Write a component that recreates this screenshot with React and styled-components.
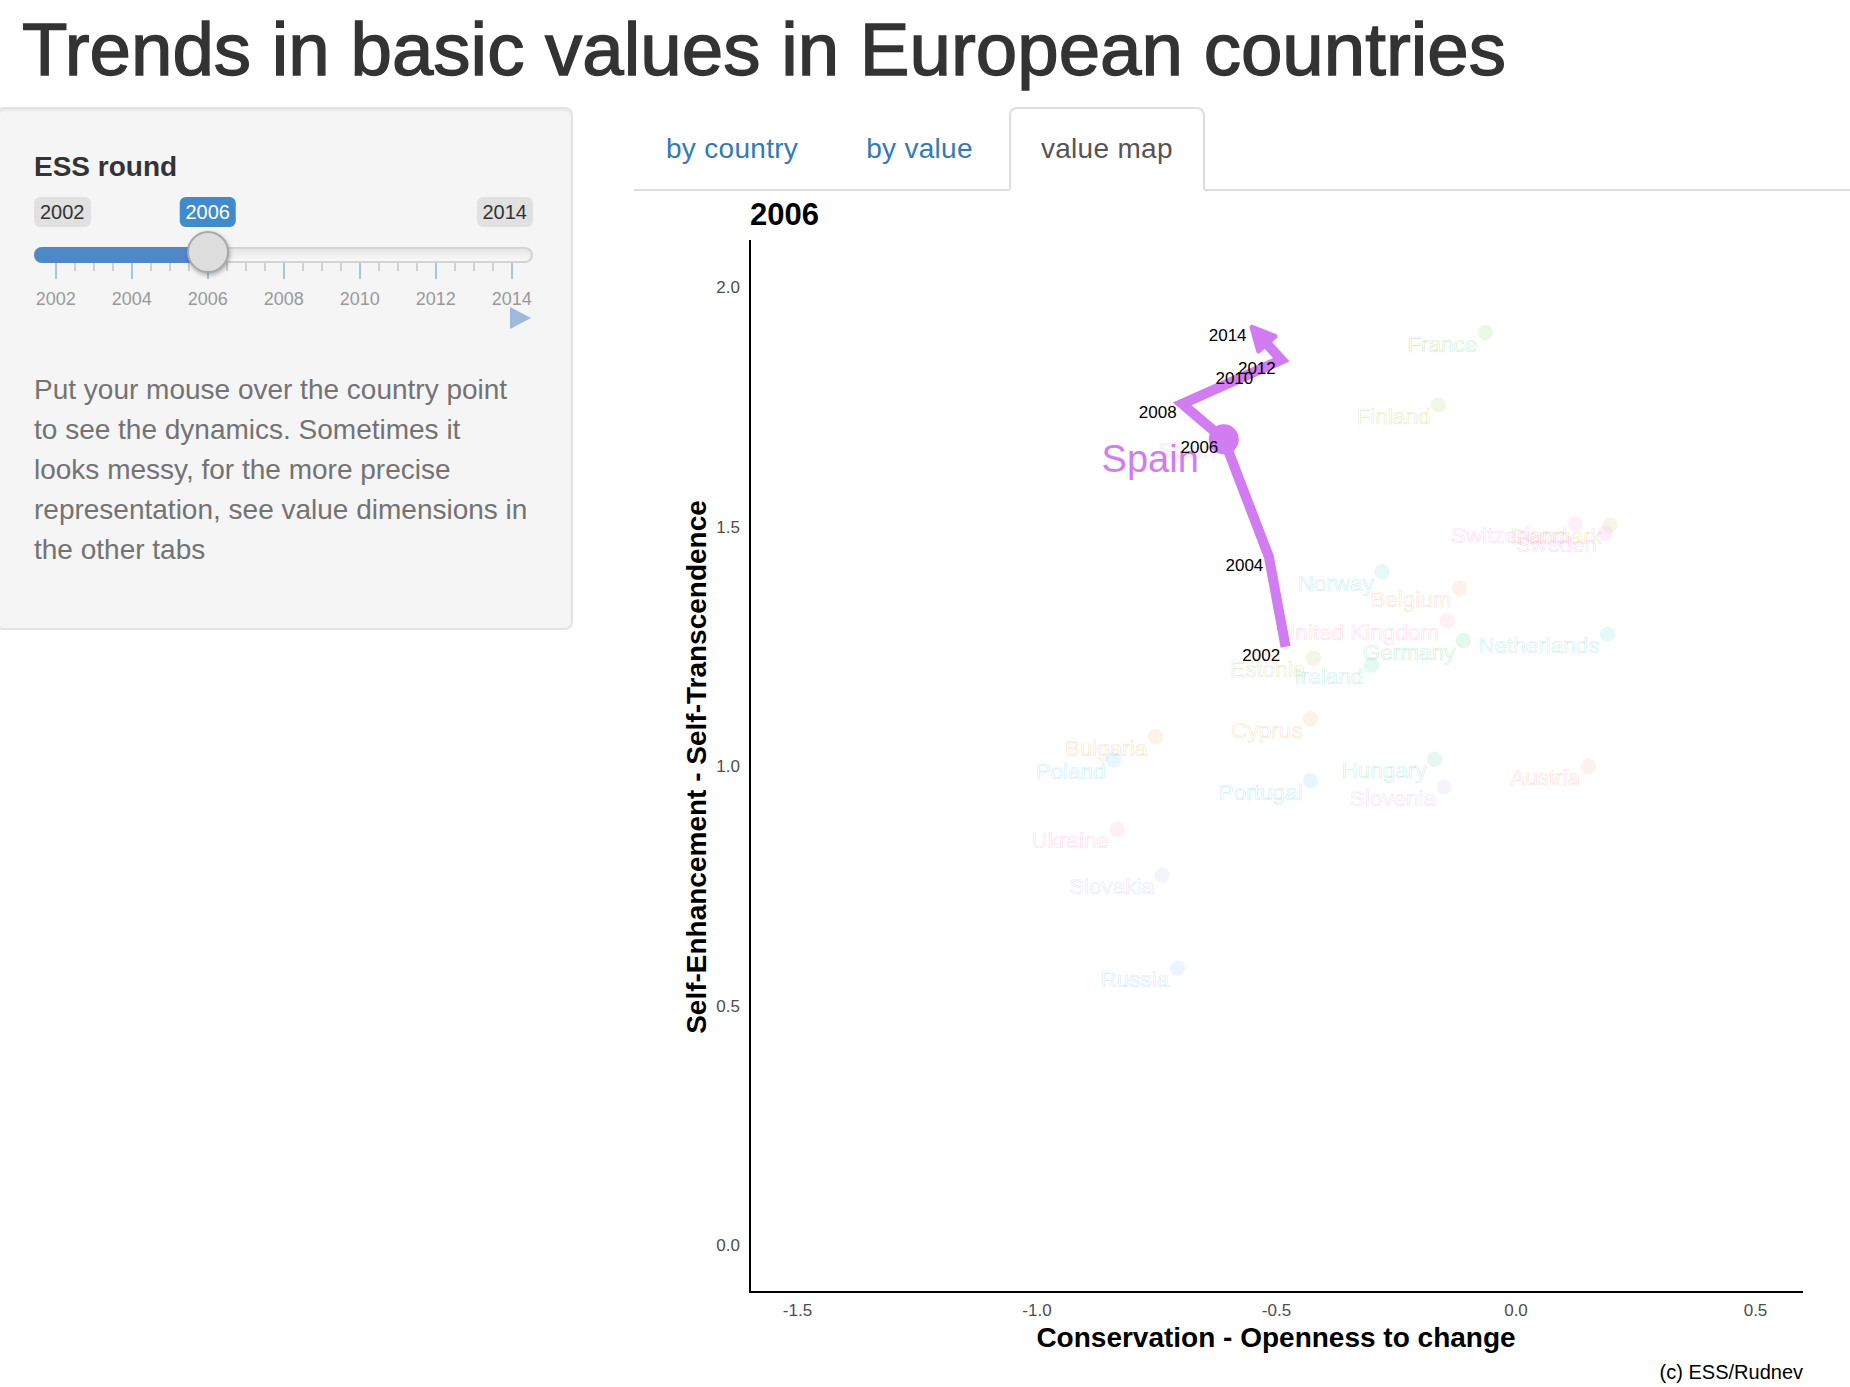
import React from "react";
import styled, { createGlobalStyle } from "styled-components";

const GlobalStyle = createGlobalStyle`
  * {
    box-sizing: border-box;
  }
  html,
  body {
    margin: 0;
    padding: 0;
    background: #fff;
    overflow: hidden;
  }
  body {
    font-family: "Liberation Sans", Helvetica, Arial, sans-serif;
    color: #333;
  }
`;

const Page = styled.div`
  width: 1850px;
  height: 1387px;
  padding-left: 22px;
  overflow: hidden;
`;

const Title = styled.h1`
  margin: 9px 0 17px;
  font-size: 74.5px;
  line-height: 81px;
  font-weight: 400;
  color: #333;
  -webkit-text-stroke: 1.4px #333;
  white-space: nowrap;
`;

const Layout = styled.div`
  display: flex;
  align-items: flex-start;
`;

const Well = styled.div`
  flex: 0 0 577px;
  width: 577px;
  min-width: 0;
  margin-left: -26px;
  padding: 36px 36px 38px;
  background: #f5f5f5;
  border: 2px solid #e3e3e3;
  border-radius: 8px;
  box-shadow: inset 0 2px 2px rgba(0, 0, 0, 0.05);
`;

const ControlLabel = styled.label`
  display: block;
  margin: 2px 0 8px;
  font-size: 28px;
  line-height: 40px;
  font-weight: 700;
  color: #333;
`;

const Slider = styled.div`
  position: relative;
  height: 175px;
`;

const EdgeLabels = styled.div`
  display: flex;
  justify-content: space-between;
  padding: 2px 2px 0 0;
`;

const Badge = styled.span`
  display: inline-block;
  padding: 2px 6px;
  border-radius: 6px;
  font-size: 20px;
  line-height: 26px;
  background: ${(p) => (p.$current ? "#428bca" : "#e1e1e1")};
  color: ${(p) => (p.$current ? "#fff" : "#333")};
`;

const CurrentBadge = styled(Badge)`
  position: absolute;
  top: 2px;
  transform: translateX(-50%);
  white-space: nowrap;
`;

const Track = styled.div`
  position: relative;
  height: 16px;
  margin: 20px 2px 0 0;
  border: 2px solid #d3d3d3;
  border-radius: 8px;
  background: linear-gradient(#e6e6e6, #f8f8f8);
`;

const TrackFill = styled.div`
  position: absolute;
  left: -2px;
  top: -2px;
  bottom: -2px;
  border-radius: 8px 0 0 8px;
  background: #4f88c7;
`;

const Handle = styled.div`
  position: absolute;
  top: 36px;
  width: 42px;
  height: 42px;
  border-radius: 50%;
  background: #dedede;
  border: 2px solid #a9a9a9;
  box-shadow: 1px 2px 4px rgba(0, 0, 0, 0.3);
  transform: translateX(-50%);
`;

const Ticks = styled.div`
  display: flex;
  justify-content: space-between;
  align-items: flex-start;
  width: 458px;
  height: 16px;
  margin-left: 20.7px;
`;

const Tick = styled.span`
  width: 2px;
  height: ${(p) => (p.$major ? 16 : 8)}px;
  background: ${(p) => (p.$major ? "#a9c4e2" : "#d0d0d0")};
`;

const TickLabels = styled.div`
  display: grid;
  grid-template-columns: repeat(7, 76px);
  margin: 9px 0 0 -16.3px;
  font-size: 18px;
  line-height: 22px;
  color: #999;
  text-align: center;
`;

const PlayButton = styled.button`
  display: block;
  width: 0;
  height: 0;
  margin: -3px 4px 0 auto;
  padding: 0;
  background: none;
  border: none;
  border-left: 21px solid #9db9db;
  border-top: 11px solid transparent;
  border-bottom: 11px solid transparent;
  cursor: pointer;
`;

const Help = styled.p`
  max-width: 495px;
  margin: 0 0 20px;
  font-size: 28px;
  line-height: 40px;
  color: #737373;
`;

const Main = styled.div`
  flex: 1;
  min-width: 0;
  margin-left: 61px;
`;

const Tabs = styled.ul`
  display: flex;
  margin: 0;
  padding: 0;
  list-style: none;
  border-bottom: 2px solid #ddd;
`;

const TabItem = styled.li`
  margin: 0 4px -2px 0;
`;

const TabLink = styled.a`
  display: block;
  padding: 20px 30px;
  font-size: 28px;
  line-height: 40px;
  letter-spacing: 0.3px;
  text-decoration: none;
  border: 2px solid ${(p) => (p.$active ? "#ddd" : "transparent")};
  border-bottom-color: ${(p) => (p.$active ? "#fff" : "transparent")};
  border-radius: 8px 8px 0 0;
  background: ${(p) => (p.$active ? "#fff" : "transparent")};
  color: ${(p) => (p.$active ? "#555" : "#337ab7")};
  cursor: pointer;
`;

const Plot = styled.svg`
  display: block;
  font-family: "Liberation Sans", Helvetica, Arial, sans-serif;
`;

// ggplot-like hcl palette
const hcl = (h, c = 100, l = 65) => {
  const rad = (h * Math.PI) / 180;
  const U = c * Math.cos(rad);
  const V = c * Math.sin(rad);
  const Xn = 95.047, Yn = 100, Zn = 108.883;
  const un = (4 * Xn) / (Xn + 15 * Yn + 3 * Zn);
  const vn = (9 * Yn) / (Xn + 15 * Yn + 3 * Zn);
  const Y = Yn * Math.pow((l + 16) / 116, 3);
  const u = U / (13 * l) + un;
  const v = V / (13 * l) + vn;
  const X = (Y * 9 * u) / (4 * v);
  const Z = (Y * (12 - 3 * u - 20 * v)) / (4 * v);
  const x = X / 100, y = Y / 100, z = Z / 100;
  const lin = [
    3.2406 * x - 1.5372 * y - 0.4986 * z,
    -0.9689 * x + 1.8758 * y + 0.0415 * z,
    0.0557 * x - 0.204 * y + 1.057 * z,
  ];
  const hex = lin
    .map((ch) => (ch <= 0.0031308 ? 12.92 * ch : 1.055 * Math.pow(ch, 1 / 2.4) - 0.055))
    .map((ch) => Math.round(Math.min(1, Math.max(0, ch)) * 255))
    .map((ch) => ch.toString(16).padStart(2, "0"))
    .join("");
  return `#${hex}`;
};

const countries = [
  { name: "Austria", x: 0.151, y: 0.999 },
  { name: "Belgium", x: -0.118, y: 1.371 },
  { name: "Bulgaria", x: -0.753, y: 1.061 },
  { name: "Cyprus", x: -0.429, y: 1.098 },
  { name: "Denmark", x: 0.196, y: 1.503 },
  { name: "Estonia", x: -0.423, y: 1.225 },
  { name: "Finland", x: -0.162, y: 1.754 },
  { name: "France", x: -0.064, y: 1.905 },
  { name: "Germany", x: -0.11, y: 1.262 },
  { name: "Hungary", x: -0.17, y: 1.014 },
  { name: "Ireland", x: -0.302, y: 1.211 },
  { name: "Netherlands", x: 0.191, y: 1.275 },
  { name: "Norway", x: -0.28, y: 1.406 },
  { name: "Poland", x: -0.84, y: 1.013 },
  { name: "Portugal", x: -0.429, y: 0.969 },
  { name: "Russia", x: -0.707, y: 0.578 },
  { name: "Slovakia", x: -0.739, y: 0.772 },
  { name: "Slovenia", x: -0.15, y: 0.956 },
  { name: "Spain", x: -0.61, y: 1.682 },
  { name: "Sweden", x: 0.186, y: 1.486 },
  { name: "Switzerland", x: 0.124, y: 1.505 },
  { name: "Ukraine", x: -0.833, y: 0.868 },
  { name: "United Kingdom", x: -0.144, y: 1.303 },
].map((c, i, all) => ({ ...c, color: hcl(15 + (360 / all.length) * i) }));

const spainPath = [
  { year: 2002, x: -0.481, y: 1.249 },
  { year: 2004, x: -0.516, y: 1.437 },
  { year: 2006, x: -0.61, y: 1.682 },
  { year: 2008, x: -0.697, y: 1.756 },
  { year: 2010, x: -0.537, y: 1.827 },
  { year: 2012, x: -0.49, y: 1.848 },
  { year: 2014, x: -0.551, y: 1.916 },
];

const SPAIN = "#d27cf1";
const sx = (v) => 1516 + 479 * v;
const sy = (v) => 1245 - 479 * v;

const ValueMap = ({ year }) => {
  const pts = spainPath.map((p) => ({ ...p, px: sx(p.x), py: sy(p.y) }));
  const tip = pts[pts.length - 1];
  const prev = pts[pts.length - 2];
  const len = Math.hypot(tip.px - prev.px, tip.py - prev.py);
  const ux = (tip.px - prev.px) / len;
  const uy = (tip.py - prev.py) / len;
  const bx = tip.px - ux * 22;
  const by = tip.py - uy * 22;
  const head = [
    [tip.px, tip.py],
    [bx - uy * 11, by + ux * 11],
    [bx + uy * 11, by - ux * 11],
  ];
  const line = [...pts.slice(0, -1).map((p) => [p.px, p.py]), [bx, by]];
  const current = pts.find((p) => p.year === year);

  return (
    <Plot width="1216" height="1196" viewBox="634 191 1216 1196">
      <text x="750" y="225" fontSize="31" fontWeight="700" fill="#000">
        {year}
      </text>

      {[0, 0.5, 1, 1.5, 2].map((v) => (
        <text key={v} x="740" y={sy(v) + 6} fontSize="17" fill="#4d4d4d" textAnchor="end">
          {v.toFixed(1)}
        </text>
      ))}
      {[-1.5, -1, -0.5, 0, 0.5].map((v) => (
        <text key={v} x={sx(v)} y="1316" fontSize="17" fill="#4d4d4d" textAnchor="middle">
          {v.toFixed(1)}
        </text>
      ))}

      {countries.map((c) => (
        <g key={c.name}>
          <circle cx={sx(c.x)} cy={sy(c.y)} r="7.7" fill={c.color} fillOpacity="0.1" />
          <text
            x={sx(c.x) - 8}
            y={sy(c.y) + 19}
            fontSize="22.5"
            textAnchor="end"
            fill="none"
            stroke={c.color}
            strokeOpacity="0.24"
            strokeWidth="0.7"
          >
            {c.name}
          </text>
        </g>
      ))}

      <text x={current.px - 25} y={current.py + 33} fontSize="38" fill={SPAIN} textAnchor="end">
        Spain
      </text>
      <polyline
        points={line.map((p) => p.join(",")).join(" ")}
        fill="none"
        stroke={SPAIN}
        strokeWidth="10"
        strokeLinejoin="miter"
      />
      <polygon
        points={head.map((p) => p.join(",")).join(" ")}
        fill={SPAIN}
        stroke={SPAIN}
        strokeWidth="5"
        strokeLinejoin="round"
      />
      <circle cx={current.px} cy={current.py} r="15" fill={SPAIN} />
      {pts.map((p) => (
        <text key={p.year} x={p.px - 5.5} y={p.py + 14} fontSize="17" fill="#000" textAnchor="end">
          {p.year}
        </text>
      ))}

      <line x1="750" y1="240" x2="750" y2="1293" stroke="#000" strokeWidth="2" />
      <line x1="749" y1="1292" x2="1803" y2="1292" stroke="#000" strokeWidth="2" />

      <text x="1276" y="1347" fontSize="28" fontWeight="700" fill="#000" textAnchor="middle">
        Conservation - Openness to change
      </text>
      <text
        transform="translate(706 767) rotate(-90)"
        fontSize="28"
        fontWeight="700"
        fill="#000"
        textAnchor="middle"
      >
        Self-Enhancement - Self-Transcendence
      </text>
      <text x="1803" y="1379" fontSize="20" fill="#000" textAnchor="end">
        (c) ESS/Rudnev
      </text>
    </Plot>
  );
};

const years = [2002, 2004, 2006, 2008, 2010, 2012, 2014];
const MIN = 2002;
const MAX = 2014;
const GRID_LEFT = 21.7;
const PX_PER_YEAR = 38;

const RoundSlider = ({ value }) => {
  const pos = GRID_LEFT + (value - MIN) * PX_PER_YEAR;
  const ticks = Array.from({ length: (MAX - MIN) * 2 + 1 }, (_, i) => i);
  return (
    <Slider>
      <EdgeLabels>
        <Badge>{MIN}</Badge>
        <Badge>{MAX}</Badge>
      </EdgeLabels>
      <CurrentBadge $current style={{ left: pos }}>
        {value}
      </CurrentBadge>
      <Track>
        <TrackFill style={{ width: pos }} />
      </Track>
      <Handle style={{ left: pos }} />
      <Ticks>
        {ticks.map((i) => (
          <Tick key={i} $major={i % 4 === 0} />
        ))}
      </Ticks>
      <TickLabels>
        {years.map((y) => (
          <span key={y}>{y}</span>
        ))}
      </TickLabels>
      <PlayButton aria-label="play" />
    </Slider>
  );
};

const App = () => {
  const year = 2006;
  return (
    <Page>
      <GlobalStyle />
      <Title>Trends in basic values in European countries</Title>
      <Layout>
        <Well>
          <ControlLabel>ESS round</ControlLabel>
          <RoundSlider value={year} />
          <Help>
            Put your mouse over the country point to see the dynamics. Sometimes it looks
            messy, for the more precise representation, see value dimensions in the other tabs
          </Help>
        </Well>
        <Main>
          <Tabs>
            <TabItem>
              <TabLink>by country</TabLink>
            </TabItem>
            <TabItem>
              <TabLink>by value</TabLink>
            </TabItem>
            <TabItem>
              <TabLink $active>value map</TabLink>
            </TabItem>
          </Tabs>
          <ValueMap year={year} />
        </Main>
      </Layout>
    </Page>
  );
};

export default App;
